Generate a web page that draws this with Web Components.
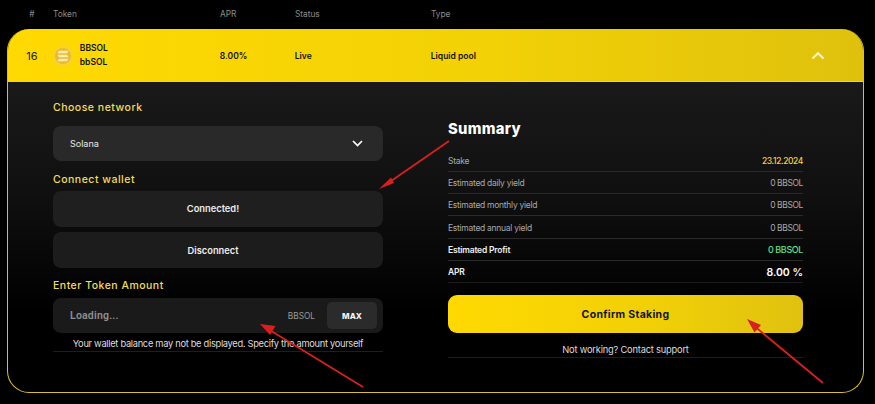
<!DOCTYPE html>
<html><head><meta charset="utf-8">
<style>
html,body{margin:0;padding:0;background:#000;}
body{width:875px;height:404px;overflow:hidden;position:relative;font-family:Inter,"Liberation Sans",sans-serif;color:#fff;}
</style></head><body>
<template id="t-head"><style>
:host{display:grid;grid-template-columns:46px 167px 75px 136px 1fr;height:29px;align-items:center;margin-left:7px;font:400 8.3px Inter,sans-serif;color:#8d8d8d;box-sizing:border-box;padding-bottom:2px}
.n{text-align:center;padding-left:4px}
</style><span class="n">#</span><span>Token</span><span>APR</span><span>Status</span><span>Type</span></template>

<template id="t-card"><style>
:host{display:block;width:857px;margin-left:7px;height:364px;box-sizing:border-box;border-radius:22px;overflow:hidden;border:1.2px solid #d6c22e;border-top:0;background:linear-gradient(180deg,#1e1e1e 0%,#101010 45%,#000 78%);}
.cols{display:flex;padding-left:45px;}
</style><slot name="top"></slot><div class="cols"><slot></slot></div></template>

<template id="t-row"><style>
:host{display:grid;grid-template-columns:46px 167px 75px 136px 1fr 62px;align-items:center;height:50px;padding-top:1.5px;margin:0 -1.2px;background:linear-gradient(90deg,#ffd900 0%,#f2d106 55%,#dfc10d 100%);border-bottom:1px solid #f6d90c;color:#111;font:600 8.5px Inter,sans-serif;}
.n{text-align:center;padding-left:4px;font:400 11px Inter,sans-serif;color:#222}
.tok{display:flex;align-items:center;gap:7px}
.nm{display:flex;flex-direction:column;gap:5px;line-height:9px}
svg{display:block}
</style><span class="n">16</span><span class="tok"><svg width="20" height="20" viewBox="0 0 20 20"><circle cx="10" cy="10" r="10" fill="#f5d23c"/><circle cx="10" cy="10" r="8" fill="#ecb92f"/><g fill="#fdeeb0"><path d="M6 4.800h9.500l-1.500 2.500H4.500z"/><path d="M4.500 8.800H14l1.500 2.500H6z"/><path d="M6 12.700h9.500L14 15.200H4.500z"/></g></svg><span class="nm"><span>BBSOL</span><span>bbSOL</span></span></span><span>8.00%</span><span>Live</span><span>Liquid pool</span><svg width="14" height="9" viewBox="0 0 14 9" fill="none" stroke="#fff6c8" stroke-width="2" style="margin-left:9px"><path d="M1.500 7.500 7 2.200l5.500 5.300"/></svg></template>

<template id="t-left"><style>
:host{display:flex;flex-direction:column;width:330px;flex:none;padding-top:18px}
h3{margin:0;font:500 10.500px/16px Inter,sans-serif;letter-spacing:.5px;color:#f5dc5a}
.sel{margin-top:10px;height:35px;border-radius:8px;background:#292929;display:flex;align-items:center;justify-content:space-between;padding:0 20px 0 17px;font:400 9px Inter,sans-serif;color:#e8e8e8}
.h2{margin-top:11px}.b{height:36px;border-radius:8px;background:#1f1f1f;display:flex;align-items:center;justify-content:center;padding-right:10px;font:600 9.300px Inter,sans-serif;color:#eee}
.b1{margin-top:3px}.b2{margin-top:5.500px;background:#1c1c1c}
.h3{margin-top:10px}
.inp{margin-top:4px;height:35px;border-radius:8px;background:#1a1a1a;display:flex;align-items:center;padding:0 6px 0 17px}
.inp .l{flex:1;font:600 10.500px "Roboto",sans-serif;color:#8f8f8f;letter-spacing:.2px}
.inp .u{font:400 8.300px Inter,sans-serif;color:#9a9a9a;margin-right:12px}
.max{width:50px;height:27px;border-radius:5px;background:#2b2b2b;display:flex;align-items:center;justify-content:center;font:800 8px Inter,sans-serif;color:#f2f2f2}
.note{height:16px;margin-top:1.500px;border-bottom:1px solid #1e1e1e;text-align:center;font:400 9.300px/18px Inter,sans-serif;letter-spacing:-.3px;color:#ddd;white-space:nowrap}
svg{display:block}
</style><h3>Choose network</h3>
<div class="sel"><span>Solana</span><svg width="11" height="7" viewBox="0 0 11 7" fill="none" stroke="#fff" stroke-width="1.700"><path d="M1 1l4.500 4.500L10 1"/></svg></div>
<h3 class="h2">Connect wallet</h3>
<div class="b b1">Connected!</div><div class="b b2">Disconnect</div>
<h3 class="h3">Enter Token Amount</h3>
<div class="inp"><span class="l">Loading...</span><span class="u">BBSOL</span><span class="max">MAX</span></div>
<div class="note">Your wallet balance may not be displayed. Specify the amount yourself</div></template>

<template id="t-right"><style>
:host{display:flex;flex-direction:column;width:355px;flex:none;margin-left:65px;padding-top:37px}
h2{margin:0 0 12px;font:800 14.800px/20px Inter,sans-serif;letter-spacing:.3px;color:#fff}
.btn{margin-top:11.200px;height:38px;border-radius:9px;background:linear-gradient(90deg,#ffd900,#f0cf08 60%,#e0c10f);display:flex;align-items:center;justify-content:center;font:700 10.500px Inter,sans-serif;letter-spacing:.3px;color:#141414}
.sup{margin-top:5.500px;height:18px;border-bottom:1px solid #1e1e1e;text-align:center;font:400 9.300px/22px Inter,sans-serif;letter-spacing:-.2px;color:#ddd}
</style><h2>Summary</h2><slot></slot><div class="btn">Confirm Staking</div><div class="sup">Not working? Contact support</div></template>

<template id="t-line"><style>
:host{display:flex;justify-content:space-between;align-items:center;height:20.300px;margin-bottom:1px;border-bottom:1px solid #2a2a2a;font:400 8.500px Inter,sans-serif;letter-spacing:-.28px;color:#a9a9a9}
:host([strong]){color:#f0f0f0;font-weight:600;letter-spacing:-.2px}
:host([last]){border-bottom-color:#1c1c1c}
::slotted([slot=v]){letter-spacing:-.4px}
</style><slot></slot><slot name="v"></slot></template>

<template id="t-arrows"><style>
:host{display:block;position:absolute;inset:0;pointer-events:none}
svg{display:block}
</style><svg width="875" height="404" viewBox="0 0 875 404" fill="#d8201f" stroke="#d8201f"><g stroke-width="1.800"><path d="M449 141 386 184.500"/><path d="M363 387 268 329"/><path d="M823 383 753 325"/></g><g stroke="none"><path d="M379 189 391 177.500 394 183z"/><path d="M260 324 275.500 326 270 335z"/><path d="M747 319 761 325 754.500 332.500z"/></g></svg></template>

<script>
const def=(n,t)=>customElements.define(n,class extends HTMLElement{constructor(){super();this.attachShadow({mode:'open'}).append(document.getElementById(t).content.cloneNode(true));}});
[['stake-head','t-head'],['stake-card','t-card'],['stake-row','t-row'],['stake-left','t-left'],['stake-right','t-right'],['sum-line','t-line'],['red-arrows','t-arrows']].forEach(a=>def(...a));
</script>
<stake-head></stake-head>
<stake-card>
<stake-row slot="top"></stake-row>
<stake-left></stake-left>
<stake-right>
<sum-line>Stake<span slot="v" style="color:#f6d13f;font-weight:500">23.12.2024</span></sum-line>
<sum-line>Estimated daily yield<span slot="v">0 BBSOL</span></sum-line>
<sum-line>Estimated monthly yield<span slot="v">0 BBSOL</span></sum-line>
<sum-line>Estimated annual yield<span slot="v">0 BBSOL</span></sum-line>
<sum-line strong>Estimated Profit<span slot="v" style="color:#5fe08a;font-size:9px;font-weight:500">0 BBSOL</span></sum-line>
<sum-line strong last>APR<span slot="v" style="color:#fff;font-size:10.500px;letter-spacing:0">8.00 %</span></sum-line>
</stake-right>
</stake-card>
<red-arrows></red-arrows>
</body></html>
